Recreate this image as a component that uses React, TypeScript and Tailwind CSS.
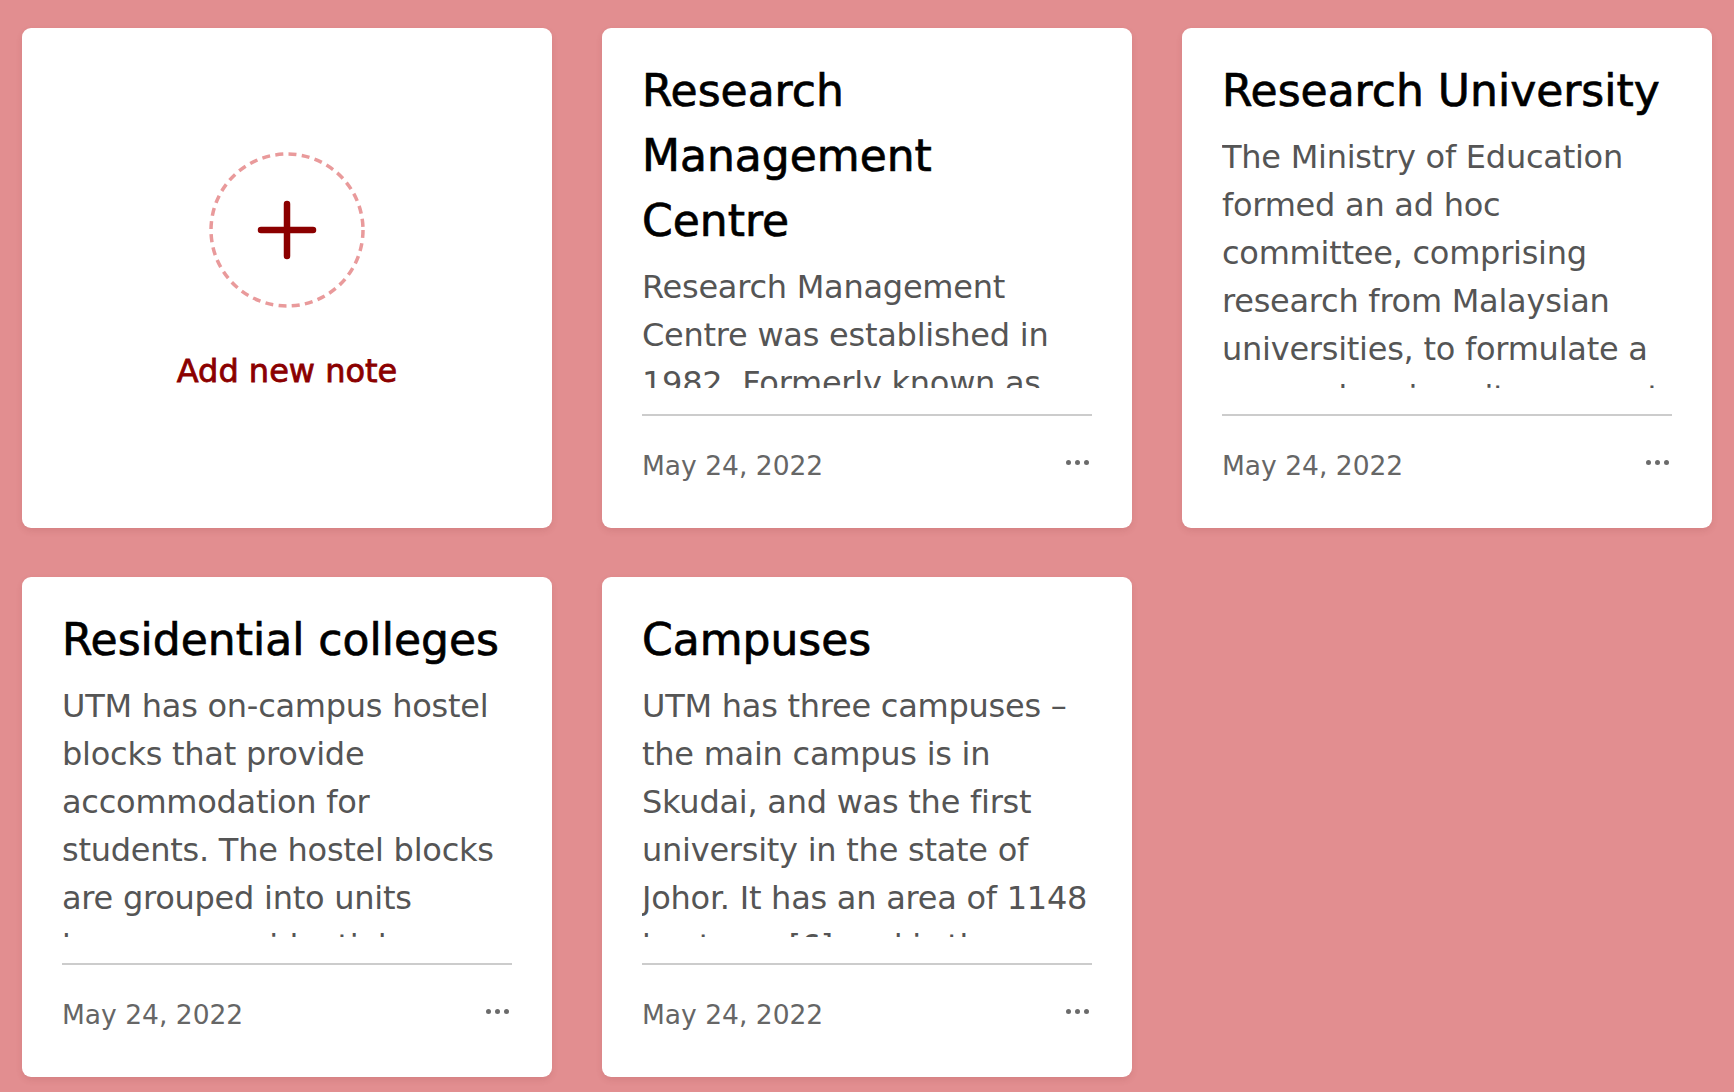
const notes = [
  {
    title: "Research Management Centre",
    body: "Research Management Centre was established in 1982. Formerly known as the Unit for Research and Consultancy, it coordinates research activities across the university.",
    date: "May 24, 2022",
  },
  {
    title: "Research University",
    body: "The Ministry of Education formed an ad hoc committee, comprising research from Malaysian universities, to formulate a research university concept and its criteria.",
    date: "May 24, 2022",
  },
  {
    title: "Residential colleges",
    body: "UTM has on-campus hostel blocks that provide accommodation for students. The hostel blocks are grouped into units known as residential colleges.",
    date: "May 24, 2022",
  },
  {
    title: "Campuses",
    body: "UTM has three campuses – the main campus is in Skudai, and was the first university in the state of Johor. It has an area of 1148 hectares,[6] and is the largest in Malaysia.",
    date: "May 24, 2022",
  },
];

const font = { fontFamily: "'DejaVu Sans', 'Open Sans', sans-serif" };

function AddNote() {
  return (
    <button className="h-[500px] bg-white rounded-[9px] shadow-[0_3px_6px_rgba(120,40,40,0.12)] flex flex-col items-center justify-center pb-[13px]">
      <svg width="156" height="156" viewBox="0 0 156 156">
        <circle cx="78" cy="78" r="76" fill="none" stroke="#e99a9b" strokeWidth="3.5" strokeDasharray="8 5.3" />
        <path d="M78 52v52M52 78h52" stroke="#8b0000" strokeWidth="6.5" strokeLinecap="round" />
      </svg>
      <span className="mt-[43px] text-[32px] leading-[40px] font-normal text-[#8b0000] [-webkit-text-stroke:0.8px_#8b0000]">
        Add new note
      </span>
    </button>
  );
}

function NoteCard({ title, body, date }: { title: string; body: string; date: string }) {
  return (
    <div className="h-[500px] bg-white rounded-[9px] shadow-[0_3px_6px_rgba(120,40,40,0.12)] flex flex-col px-10 pt-[30px] pb-[42px]">
      <h2 className="text-[44px] leading-[65px] font-normal text-black [-webkit-text-stroke:0.7px_#000]">{title}</h2>
      <p className="mt-[10px] flex-1 overflow-hidden text-[32px] leading-[48px] tracking-[-0.25px] text-[#555555]">{body}</p>
      <div className="mt-[26px] h-[2px] bg-[#cccccc]" />
      <div className="pt-[30px] flex items-center justify-between">
        <span className="text-[26.5px] leading-[40px] text-[#666666]">{date}</span>
        <span className="flex gap-1 mr-[3px] -translate-y-1">
          <span className="w-[5px] h-[5px] rounded-full bg-[#6b6b6b]" />
          <span className="w-[5px] h-[5px] rounded-full bg-[#6b6b6b]" />
          <span className="w-[5px] h-[5px] rounded-full bg-[#6b6b6b]" />
        </span>
      </div>
    </div>
  );
}

export default function App() {
  return (
    <div className="min-h-screen bg-[#e28e90] pl-[22px] pt-[28px] pb-[15px]" style={font}>
      <div className="grid grid-cols-[530px_530px_530px] gap-x-[50px] gap-y-[49px]">
        <AddNote />
        {notes.map((n) => (
          <NoteCard key={n.title} {...n} />
        ))}
      </div>
    </div>
  );
}
